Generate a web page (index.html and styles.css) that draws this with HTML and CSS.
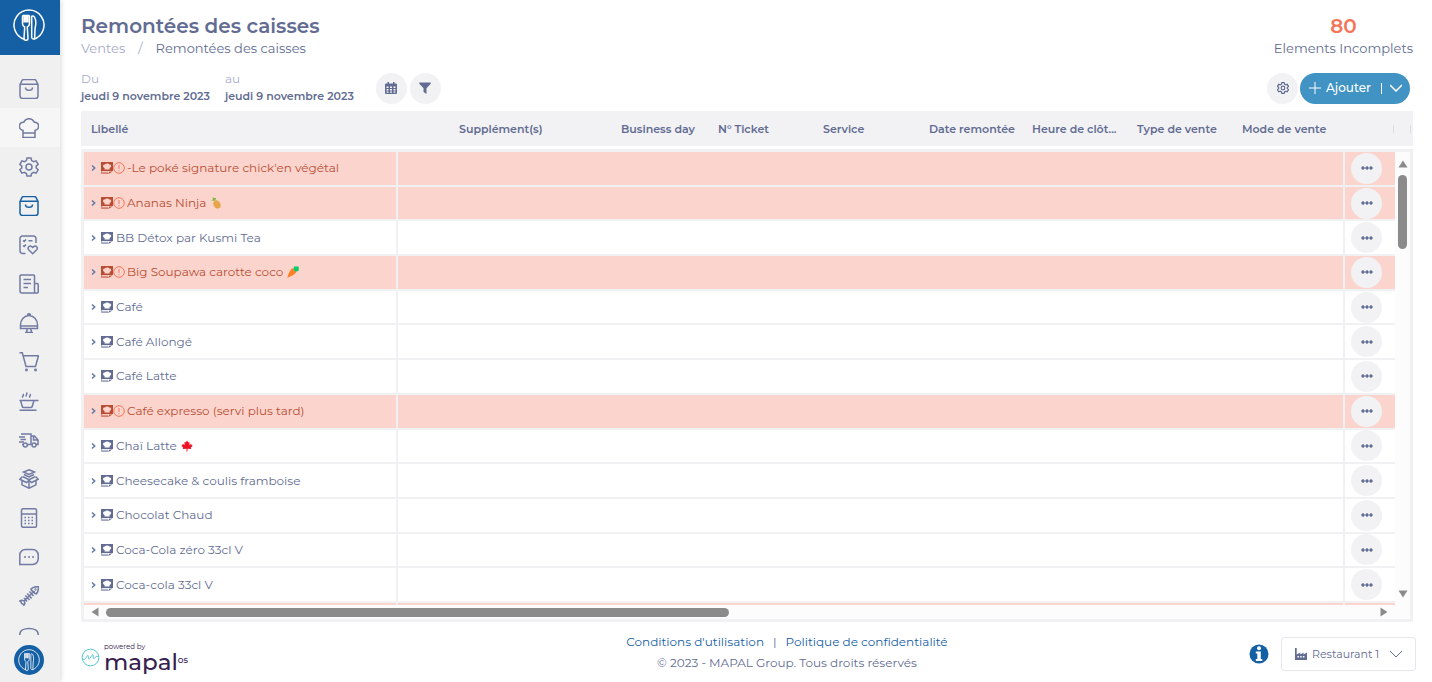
FILE: index.html
```html
<!DOCTYPE html>
<html lang="fr">
<head>
<meta charset="utf-8">
<title>Remontées des caisses</title>
<link rel="stylesheet" href="styles.css">
</head>
<body>
<svg class="sprite" aria-hidden="true">
  <symbol id="cutlery" viewBox="0 0 32 32"><path d="M11.500 30.300A15 15 0 1 1 20.500 30.300"/><path d="M9.500 6.500v8c0 2 1 3 2.200 3.500L11 29.500M16.500 6.500v8c0 2-1 3-2.200 3.500l.7 11.500c0 2.400-4 2.400-4 0M9.500 6.500h1.700v7M16.500 6.500h-1.700v7M12.200 13.500v-7h1.600v7"/><path d="M18.700 28.500V8c0-1.500 2-1.500 3 .5 1.200 2.500 1.200 7.500.4 10.500l-.4 9.500M18.700 28.500c.3 2 2.700 2 3 0"/></symbol>
  <symbol id="bag" viewBox="0 0 20 20"><path d="M1 5.500L3 1.500Q3.500.5 4.700.5h10.600q1.200 0 1.700 1L19 5.500V17a2.500 2.500 0 0 1-2.500 2.500h-13A2.500 2.500 0 0 1 1 17zM1.200 5.300h17.600M6.500 8.500q0 2.800 3.500 2.800t3.500-2.800"/></symbol>
  <symbol id="chef" viewBox="0 0 20 20"><path d="M4 19.400v-7C1.800 12 .4 10.200.4 8.200c0-2.600 2-4.200 4.400-4C5.800 2 7.800.7 10 .7s4.200 1.300 5.200 3.500c2.400-.2 4.400 1.400 4.400 4 0 2-1.400 3.800-3.600 4.200v7zM4 15h12"/></symbol>
  <symbol id="gear" viewBox="0 0 20 20"><path d="M8 1h4l.6 2.600 2 1.100 2.500-.8 2 3.400-1.900 1.800v1.900l1.900 1.800-2 3.400-2.500-.8-2 1.100L12 19H8l-.6-2.500-2-1.100-2.500.8-2-3.400L2.800 11V9.100L.9 7.300l2-3.400 2.500.8 2-1.100z"/><circle cx="10" cy="10" r="3"/></symbol>
  <symbol id="checkheart" viewBox="0 0 20 20"><path d="M6.500 18.500H3.500a2.500 2.500 0 0 1-2.500-2.500V3.500A2.500 2.500 0 0 1 3.500 1h11A2.500 2.500 0 0 1 17 3.500V8M4 5.500l1.200 1L7 4.500M9.500 5.700h4M4 10.500l1.200 1L7 9.500M13.700 18.800l-4-4c-1.800-2 .8-5 3-3.200l1 .9 1-.9c2.200-1.800 4.800 1.200 3 3.200z"/></symbol>
  <symbol id="news" viewBox="0 0 20 20"><path d="M15.500 9.500h2.700a1 1 0 0 1 1 1V18a1 1 0 0 1-1 1H3a2 2 0 0 1-2-2V2a1 1 0 0 1 1-1h12.500a1 1 0 0 1 1 1v15c0 1.300.5 2 1.200 2M4.500 5.500h7.500M4.500 9.500h7.500M4.500 13.500h4.500"/></symbol>
  <symbol id="cloche" viewBox="0 0 20 20"><path d="M1.500 15.500v-3.500a8.500 9.500 0 0 1 17 0v3.500zM1.500 13h17M8.500 2.500c0-2.200 3-2.200 3 0M8.200 16l-.6 3.500M11.800 16l.6 3.500M6 19.500h8"/></symbol>
  <symbol id="cart" viewBox="0 0 20 20"><path d="M.5.800h2.800L7 14.500h9.500l3-10.700H4.200"/><circle cx="7.500" cy="18" r=".7"/><circle cx="16.500" cy="18" r=".7"/></symbol>
  <symbol id="pot" viewBox="0 0 20 20"><path d="M.5 9.500h19M1.500 9.500l1.800 6q.3 1 1.300 1h7.300q1 0 1.300-1l1.800-6M.5 19.300h17M4 6.500c-1.500-1 1.500-2 0-3.500M7.500 5.500c-1.500-1 1.500-2.500 0-4M11 6.500c-1.500-1 1.500-2 0-3.500"/></symbol>
  <symbol id="truck" viewBox="0 0 20 20"><path d="M2 4h10v10.500H8.500M4 14.500H3M12 6h3.500l3.500 4v4.500h-2M12 14.500h.8M14.500 6.500V10H19M0 7h6M1.500 9.500H7M0 12h5"/><circle cx="6.300" cy="15" r="2"/><circle cx="15" cy="15" r="2"/></symbol>
  <symbol id="boxes" viewBox="0 0 20 20"><path d="M10 .8L15.500 3 10 5.500 4.500 3zM5 5.500l5 2.500 5-2.500M4 7.800l6 2.900 6-2.900M3.500 7.500L.8 10.200 7.500 13.500l2.500-2.300 2.500 2.300 6.700-3.300-2.700-2.700M3 11.800v4l7 3.400 7-3.400v-4M10 11.200v8"/></symbol>
  <symbol id="calc" viewBox="0 0 20 20"><rect x="2.500" y=".8" width="15" height="18.400" rx="1.500"/><path d="M2.500 6h15"/><path stroke-dasharray="1.500 2" d="M5.500 9.500h9.500M5.500 12.500h9.500M5.500 15.500h9.500"/></symbol>
  <symbol id="chat" viewBox="0 0 20 20"><path d="M.8 17.500V8a5.500 5.500 0 0 1 5.500-5.500h7.400A5.500 5.500 0 0 1 19.200 8v4a5.500 5.500 0 0 1-5.500 5.500z"/><path stroke-width="1.800" stroke-linecap="round" d="M6 10h.1M10 10h.1M14 10h.1"/></symbol>
  <symbol id="fish" viewBox="0 0 20 20"><path d="M12 3c2-2 5-2.500 7.400-2.200.2 2.500-.2 5.200-2.200 7.200-1.400-.2-2-.8-2-2.200-1.700-.2-2.800-1-3.200-2.800zM15 5.500L5 15M5 15c-1.500-1-3-.9-4.300 0C2 15.500 2.600 16.500 2.700 17.500c1 .2 1.800.8 2.200 1.800C6 18 6.200 16.500 5 15M10.500 5.500l4 4.500M8.200 7.500l4.500 5M6.300 9.500l4.300 4.500M5 12l3 3.500"/><circle cx="16.500" cy="3.500" r=".4"/></symbol>
  <symbol id="arc" viewBox="0 0 20 20"><path d="M.8 9.500C.8 5.500 5 3.500 10 3.500s9.200 2 9.200 6-4 8-9.200 8-9.200-4-9.200-8z"/></symbol>
  <symbol id="recipe" viewBox="0 0 12 12"><path fill="currentColor" stroke="none" fill-rule="evenodd" d="M0 0h12v9H0zM3.600 7.400h5V5.900c2.300-.5 2-3.500-.3-3.300C7.400 1.200 4.800 1.200 3.900 2.600c-2.300-.2-2.600 2.800-.3 3.300z"/><path stroke-width=".6" d="M.5 9v2.500H7.500M1 10.300h6"/><path fill="currentColor" stroke="none" d="M7.500 12L8 9.800l3.700-.5z"/></symbol>
  <symbol id="warn" viewBox="0 0 12 12"><circle cx="6" cy="6" r="5.300"/><path d="M6 3v4M6 8.200v1"/></symbol>
  <symbol id="chev" viewBox="0 0 5 8"><path d="M1 1.500L3.700 4 1 6.500"/></symbol>
  <symbol id="down" viewBox="0 0 12 8"><path d="M0 1l6 6 6-6"/></symbol>
  <symbol id="dots" viewBox="0 0 12 4"><path fill="currentColor" stroke="none" d="M2 .3a1.700 1.700 0 1 0 .01 0zM6 .3a1.700 1.700 0 1 0 .01 0zM10 .3a1.700 1.700 0 1 0 .01 0z"/></symbol>
</svg>

<div class="app">
  <aside class="sidebar">
    <a class="brand" href="#" aria-label="Accueil"><svg><use href="#cutlery"/></svg></a>
    <nav class="nav" aria-label="Navigation">
      <a href="#" aria-label="Boutique"><svg><use href="#bag"/></svg></a>
      <a href="#" class="hovered" aria-label="Cuisine"><svg><use href="#chef"/></svg></a>
      <a href="#" aria-label="Paramètres"><svg><use href="#gear"/></svg></a>
      <a href="#" class="active" aria-label="Ventes"><svg><use href="#bag"/></svg></a>
      <a href="#" aria-label="Contrôles"><svg><use href="#checkheart"/></svg></a>
      <a href="#" aria-label="Actualités"><svg><use href="#news"/></svg></a>
      <a href="#" aria-label="Service"><svg><use href="#cloche"/></svg></a>
      <a href="#" aria-label="Achats"><svg><use href="#cart"/></svg></a>
      <a href="#" aria-label="Production"><svg><use href="#pot"/></svg></a>
      <a href="#" aria-label="Livraisons"><svg><use href="#truck"/></svg></a>
      <a href="#" aria-label="Stocks"><svg><use href="#boxes"/></svg></a>
      <a href="#" aria-label="Calculs"><svg><use href="#calc"/></svg></a>
      <a href="#" aria-label="Messages"><svg><use href="#chat"/></svg></a>
      <a href="#" aria-label="Pertes"><svg><use href="#fish"/></svg></a>
      <a href="#" aria-label="Plus"><svg><use href="#arc"/></svg></a>
    </nav>
    <a class="account" href="#" aria-label="Compte"><svg><use href="#cutlery"/></svg></a>
  </aside>

  <main class="main">
    <header class="top">
      <div>
        <h1>Remontées des caisses</h1>
        <nav class="crumbs" aria-label="Fil d'Ariane"><a href="#">Ventes</a><span class="slash">/</span><span>Remontées des caisses</span></nav>
      </div>
      <div class="incomplete"><strong>80</strong><span>Elements Incomplets</span></div>
    </header>

    <div class="toolbar">
      <div class="date"><span>Du</span><b>jeudi 9 novembre 2023</b></div>
      <div class="date"><span>au</span><b>jeudi 9 novembre 2023</b></div>
      <div class="tools">
        <button class="round" aria-label="Calendrier"><svg class="i12" viewBox="0 0 12 12"><path fill="currentColor" stroke="none" fill-rule="evenodd" d="M2.500 0H4v1.500h4V0h1.500v1.500H11q1 0 1 1V11q0 1-1 1H1q-1 0-1-1V2.500q0-1 1-1h1.500zM1.500 4.500v1.600h2V4.500zm3.500 0v1.600h2V4.500zm3.500 0v1.600h2V4.500zM1.500 7v1.500h2V7zM5 7v1.500h2V7zm3.500 0v1.500h2V7zm-7 2.400v1.400h2V9.400zm3.500 0v1.400h2V9.400zm3.500 0v1.400h2V9.400z"/></svg></button>
        <button class="round" aria-label="Filtrer"><svg class="i12" viewBox="0 0 12 12"><path fill="currentColor" stroke="none" d="M.3.500h11.400v1.300L7.500 6.300V12l-3-2V6.300L.3 1.800z"/></svg></button>
      </div>
      <button class="round push" aria-label="Réglages"><svg class="i12 thick"><use href="#gear"/></svg></button>
      <div class="add">
        <button class="add-main"><svg class="i12" viewBox="0 0 12 12"><path d="M6 0v12M0 6h12"/></svg>Ajouter</button>
        <button class="add-more" aria-label="Plus d'options"><svg><use href="#down"/></svg></button>
      </div>
    </div>

    <table class="head">
      <colgroup><col><col class="w162"><col class="w97"><col class="w105"><col class="w106"><col class="w103"><col class="w105"><col class="w105"><col class="w164"><col class="w17"></colgroup>
      <thead><tr><th>Libellé</th><th>Supplément(s)</th><th>Business day</th><th>N° Ticket</th><th>Service</th><th>Date remontée</th><th>Heure de clôt...</th><th>Type de vente</th><th class="edge">Mode de vente</th><th class="edge"></th></tr></thead>
    </table>

    <section class="board" aria-label="Remontées">
      <div class="rows">
        <table class="grid">
          <colgroup><col class="name"><col><col class="act"></colgroup>
          <tbody>
            <tr class="bad"><td><div class="item"><svg class="chev"><use href="#chev"/></svg><svg class="i12"><use href="#recipe"/></svg><svg class="i12 warn"><use href="#warn"/></svg><span>-Le poké signature chick'en végétal</span></div></td><td></td><td><button class="round" aria-label="Actions"><svg class="dots"><use href="#dots"/></svg></button></td></tr>
            <tr class="bad"><td><div class="item"><svg class="chev"><use href="#chev"/></svg><svg class="i12"><use href="#recipe"/></svg><svg class="i12 warn"><use href="#warn"/></svg><span>Ananas Ninja</span><svg class="emoji" viewBox="0 0 12 12"><ellipse cx="7" cy="7.500" rx="3.400" ry="4.300" fill="#e8a547" stroke="none" transform="rotate(-28 7 7.500)"/><path d="M4.500 4L1 3.200l2-.7L2.500 0l2 1.300L6 .7 5.500 3z" fill="#7ab93c" stroke="none"/></svg></div></td><td></td><td><button class="round" aria-label="Actions"><svg class="dots"><use href="#dots"/></svg></button></td></tr>
            <tr><td><div class="item"><svg class="chev"><use href="#chev"/></svg><svg class="i12"><use href="#recipe"/></svg><span>BB Détox par Kusmi Tea</span></div></td><td></td><td><button class="round" aria-label="Actions"><svg class="dots"><use href="#dots"/></svg></button></td></tr>
            <tr class="bad"><td><div class="item"><svg class="chev"><use href="#chev"/></svg><svg class="i12"><use href="#recipe"/></svg><svg class="i12 warn"><use href="#warn"/></svg><span>Big Soupawa carotte coco</span><svg class="emoji" viewBox="0 0 12 12"><path d="M5 2.500Q8.500 2 9.300 6 7 9.500.3 11.800 2 5 5 2.500z" fill="#ff8125" stroke="none"/><path d="M6.500 3.700L7 .5h4.700v4.300L8.800 5.800z" fill="#0bcb70" stroke="none"/></svg></div></td><td></td><td><button class="round" aria-label="Actions"><svg class="dots"><use href="#dots"/></svg></button></td></tr>
            <tr><td><div class="item"><svg class="chev"><use href="#chev"/></svg><svg class="i12"><use href="#recipe"/></svg><span>Café</span></div></td><td></td><td><button class="round" aria-label="Actions"><svg class="dots"><use href="#dots"/></svg></button></td></tr>
            <tr><td><div class="item"><svg class="chev"><use href="#chev"/></svg><svg class="i12"><use href="#recipe"/></svg><span>Café Allongé</span></div></td><td></td><td><button class="round" aria-label="Actions"><svg class="dots"><use href="#dots"/></svg></button></td></tr>
            <tr><td><div class="item"><svg class="chev"><use href="#chev"/></svg><svg class="i12"><use href="#recipe"/></svg><span>Café Latte</span></div></td><td></td><td><button class="round" aria-label="Actions"><svg class="dots"><use href="#dots"/></svg></button></td></tr>
            <tr class="bad"><td><div class="item"><svg class="chev"><use href="#chev"/></svg><svg class="i12"><use href="#recipe"/></svg><svg class="i12 warn"><use href="#warn"/></svg><span>Café expresso (servi plus tard)</span></div></td><td></td><td><button class="round" aria-label="Actions"><svg class="dots"><use href="#dots"/></svg></button></td></tr>
            <tr><td><div class="item"><svg class="chev"><use href="#chev"/></svg><svg class="i12"><use href="#recipe"/></svg><span>Chaï Latte</span><svg class="emoji" viewBox="0 0 12 12"><path d="M6 .5l1.300 2 1.300-.6-.3 3 2-1.200.3 1.500 1.200.4-2 2.200.4 1.200-3.700-.2V11.500h-1V8.800L1.800 9l.4-1.200-2-2.200 1.200-.4.300-1.500 2 1.200-.3-3 1.300.6z" fill="#ee1224" stroke="none"/></svg></div></td><td></td><td><button class="round" aria-label="Actions"><svg class="dots"><use href="#dots"/></svg></button></td></tr>
            <tr><td><div class="item"><svg class="chev"><use href="#chev"/></svg><svg class="i12"><use href="#recipe"/></svg><span>Cheesecake &amp; coulis framboise</span></div></td><td></td><td><button class="round" aria-label="Actions"><svg class="dots"><use href="#dots"/></svg></button></td></tr>
            <tr><td><div class="item"><svg class="chev"><use href="#chev"/></svg><svg class="i12"><use href="#recipe"/></svg><span>Chocolat Chaud</span></div></td><td></td><td><button class="round" aria-label="Actions"><svg class="dots"><use href="#dots"/></svg></button></td></tr>
            <tr><td><div class="item"><svg class="chev"><use href="#chev"/></svg><svg class="i12"><use href="#recipe"/></svg><span>Coca-Cola zéro 33cl V</span></div></td><td></td><td><button class="round" aria-label="Actions"><svg class="dots"><use href="#dots"/></svg></button></td></tr>
            <tr><td><div class="item"><svg class="chev"><use href="#chev"/></svg><svg class="i12"><use href="#recipe"/></svg><span>Coca-cola 33cl V</span></div></td><td></td><td><button class="round" aria-label="Actions"><svg class="dots"><use href="#dots"/></svg></button></td></tr>
            <tr class="bad next"><td></td><td></td><td></td></tr>
          </tbody>
        </table>
      </div>
      <div class="vbar"><svg class="arrow" viewBox="0 0 10 8"><path d="M5 .5L9.500 7.500h-9z"/></svg><div class="vthumb"></div><svg class="arrow bottom" viewBox="0 0 10 8"><path d="M5 7.500L9.500.5h-9z"/></svg></div>
      <div class="hbar"><svg class="arrow-h" viewBox="0 0 8 10"><path d="M.5 5L7.500.5v9z"/></svg><div class="hthumb"></div><svg class="arrow-h right" viewBox="0 0 8 10"><path d="M7.500 5L.5.500v9z"/></svg></div>
    </section>

    <footer class="foot">
      <div class="mapal">
        <svg class="wave" viewBox="0 0 20 20"><circle cx="10" cy="10" r="8.800"/><path d="M1.200 11c2 2.200 3.300.8 4.300-1s2.300-3.400 2.300-.8c0 3 .6 3.400 2.200.8s2.800-4 2.800-1.500c0 3 .5 3.300 2.200 1.500s2.500-1.500 3.800-.5"/></svg>
        <div class="words"><small>powered by</small><div class="mark"><span>mapal</span><sup>os</sup></div></div>
      </div>
      <div class="legal">
        <div class="links"><a href="#">Conditions d'utilisation</a><span>|</span><a href="#">Politique de confidentialité</a></div>
        <div>© 2023 - MAPAL Group. Tous droits réservés</div>
      </div>
      <div class="right">
        <button class="info" aria-label="Informations"><svg viewBox="0 0 20 20"><circle cx="10" cy="10" r="9.500" fill="#1560a4" stroke="none"/><circle cx="10" cy="4.300" r="2" fill="#fff" stroke="none"/><path d="M6.800 7.500h5v7.500h1.500v2H6.800v-2h1.500V9.500H6.800z" fill="#fff" stroke="none"/></svg></button>
        <div class="place">
          <svg class="i12" viewBox="0 0 12 12"><path fill="currentColor" stroke="none" fill-rule="evenodd" d="M0 0h1.700v6.500L5.300 4.500v2L8.500 4.500v2L12 4.500V12H0zM2.500 8v1.500h1.500V8zm2.700 0v1.500h1.500V8zm2.700 0v1.500h1.500V8z"/></svg>
          <select aria-label="Restaurant"><option>Restaurant 1</option></select>
          <svg class="caret"><use href="#down"/></svg>
        </div>
      </div>
    </footer>
  </main>
</div>
</body>
</html>
```
FILE: styles.css
```css
* { box-sizing: border-box; }
:root {
  --ink: #626c92;
  --soft: #a6acc8;
  --line: #f1f1f4;
  --fill: #f2f2f5;
  --blue: #1560a4;
}
body {
  margin: 0;
  font: 12px/16px Montserrat, Inter, sans-serif;
  color: var(--ink);
  background: #fff;
}
a { color: inherit; text-decoration: none; }
button {
  border: 0;
  padding: 0;
  background: none;
  color: inherit;
  font: inherit;
  cursor: pointer;
}
svg { display: block; flex: none; fill: none; stroke: currentColor; overflow: visible; }
.sprite { position: absolute; width: 0; height: 0; }
.i12 { width: 12px; height: 12px; }

.app { display: flex; height: 100vh; min-height: 640px; }

/* Sidebar */
.sidebar {
  flex: none;
  width: 60px;
  display: flex;
  flex-direction: column;
  background: #f0f0f0;
  box-shadow: 0 0 6px rgba(0, 0, 0, .2);
}
.brand {
  height: 55px;
  flex: none;
  padding: 9px 0 0 13px;
  background: var(--blue);
  color: #fff;
}
.brand svg { width: 32px; height: 32px; stroke-width: 1.5; }
.nav { flex: 1; min-height: 0; padding-top: 14px; overflow: hidden; }
.nav a {
  display: grid;
  place-items: center;
  height: 39px;
  padding-right: 2px;
  color: #717ba3;
}
.nav svg { width: 20px; height: 20px; stroke-width: 1.5; }
.nav .hovered { background: #f6f6f6; }
.nav .active { color: var(--blue); }
.account {
  display: grid;
  place-items: center;
  width: 30px;
  height: 30px;
  margin: 10px 0 7px 14px;
  border-radius: 50%;
  background: var(--blue);
  color: #fff;
}
.account svg { width: 22px; height: 22px; stroke-width: 1.2; }

/* Page */
.main {
  flex: 1;
  min-width: 0;
  display: flex;
  flex-direction: column;
  padding: 13px 19px 0 21px;
}
.top { display: flex; justify-content: space-between; }
h1 { margin: 0; font-size: 20px; line-height: 26px; font-weight: 600; }
.crumbs { display: flex; font-size: 13px; line-height: 18px; }
.crumbs a { color: var(--soft); }
.slash { margin: 0 13px; color: var(--soft); }
.incomplete { display: flex; flex-direction: column; align-items: center; font-size: 13px; line-height: 18px; }
.incomplete strong { font-size: 20px; line-height: 26px; font-weight: 600; color: #f47458; }

.toolbar { display: flex; align-items: center; margin: 14px 0 6px; }
.date { margin-right: 15px; }
.date span { display: block; color: var(--soft); }
.date b { display: block; font-size: 11px; line-height: 18px; font-weight: 600; }
.tools { display: flex; gap: 3px; margin-left: 7px; }
.round {
  display: grid;
  place-items: center;
  width: 31px;
  height: 31px;
  border-radius: 50%;
  background: var(--fill);
}
.push { margin: 0 2px 0 auto; }
.thick { stroke-width: 2; }
.add {
  display: flex;
  height: 31px;
  margin-right: 3px;
  border-radius: 16px;
  background: #4093c3;
  color: #fff;
}
.add-main { display: flex; align-items: center; gap: 5px; padding-left: 9px; font-weight: 500; }
.add-more { display: flex; align-items: center; padding: 0 8px 0 10px; }
.add-more::before { content: ""; width: 1px; height: 11px; margin-right: 8px; background: #fff; }
.add-more svg { width: 12px; height: 8px; stroke-width: 1.5; }

/* Column titles */
.head { width: 100%; table-layout: fixed; border-spacing: 0; background: var(--fill); }
.head th {
  height: 35px;
  padding: 0 5px 0 10px;
  overflow: hidden;
  text-align: left;
  white-space: nowrap;
  font-size: 11px;
  font-weight: 600;
}
.head .edge { background: linear-gradient(#dedee6, #dedee6) right 2px center / 1px 8px no-repeat; }
.w162 { width: 162px; }
.w97 { width: 97px; }
.w105 { width: 105px; }
.w106 { width: 106px; }
.w103 { width: 103px; }
.w164 { width: 164px; }
.w17 { width: 17px; }

/* Scrollable rows */
.board {
  flex: 1;
  min-height: 0;
  margin-top: 3px;
  display: grid;
  grid-template: minmax(0, 1fr) 14px / minmax(0, 1fr) 15px;
  border: 3px solid var(--line);
  background: #fcfcfc;
}
.rows { overflow: hidden; }
.grid { width: 100%; height: 100%; table-layout: fixed; border-spacing: 0; background: #fff; }
.name { width: 312px; }
.act { width: 52px; }
.grid td { padding: 0; border-bottom: 2px solid var(--line); }
.grid td + td { border-left: 2px solid var(--line); }
.grid td:last-child { padding-left: 6px; }
.grid .bad td { background: #fbd5cd; }
.grid .next td { height: 2px; border-bottom: 0; }
.item { display: flex; align-items: center; padding-left: 7px; white-space: nowrap; }
.item span { margin-left: 3px; }
.bad .item { color: #b94d34; }
.chev { width: 5px; height: 8px; margin-right: 5px; stroke: #6078a8; stroke-width: 1.5; }
.item .warn { margin-right: -1px; color: #f47458; }
.emoji { width: 12px; height: 12px; margin-left: 4px; }
.dots { width: 12px; height: 4px; }

.vbar { display: flex; flex-direction: column; align-items: center; padding: 8px 0 7px; }
.vthumb { width: 9px; height: 17%; margin-top: 7px; border-radius: 5px; background: #8b8b8b; }
.arrow { width: 10px; height: 8px; }
.arrow path, .arrow-h path { fill: #8b8b8b; stroke: none; }
.bottom { margin-top: auto; }
.hbar { display: flex; align-items: center; padding: 0 7px; }
.hthumb { width: 48%; height: 9px; margin-left: 7px; border-radius: 5px; background: #8b8b8b; }
.arrow-h { width: 8px; height: 10px; }
.right { margin-left: auto; }

/* Footer */
.foot {
  flex: none;
  display: grid;
  grid-template-columns: 40% 26% 1fr;
  align-items: center;
  height: 60px;
}
.mapal { display: flex; align-items: center; gap: 4px; padding-top: 10px; }
.wave { width: 19px; height: 19px; color: #45c1cf; }
.words { color: #35204f; }
.words small { display: block; font-size: 7px; line-height: 9px; }
.mark { display: flex; font: 500 23px/22px Montserrat, Inter, sans-serif; }
.mark sup { font-size: 9px; line-height: 18px; }
.legal { display: flex; flex-direction: column; align-items: center; gap: 5px; white-space: nowrap; }
.links { display: flex; gap: 9px; }
.links a { color: var(--blue); }
.foot .right { display: flex; align-items: center; gap: 12px; margin-right: -3px; padding-top: 3px; }
.info svg { width: 20px; height: 20px; }
.place {
  display: flex;
  align-items: center;
  height: 34px;
  padding: 0 13px;
  border: 1px solid #e6e6ec;
  border-radius: 3px;
}
.place select {
  appearance: none;
  margin: 0 10px 0 5px;
  padding: 0;
  border: 0;
  background: none;
  color: inherit;
  font: inherit;
  font-size: 11px;
}
.caret { width: 12px; height: 8px; }
```
